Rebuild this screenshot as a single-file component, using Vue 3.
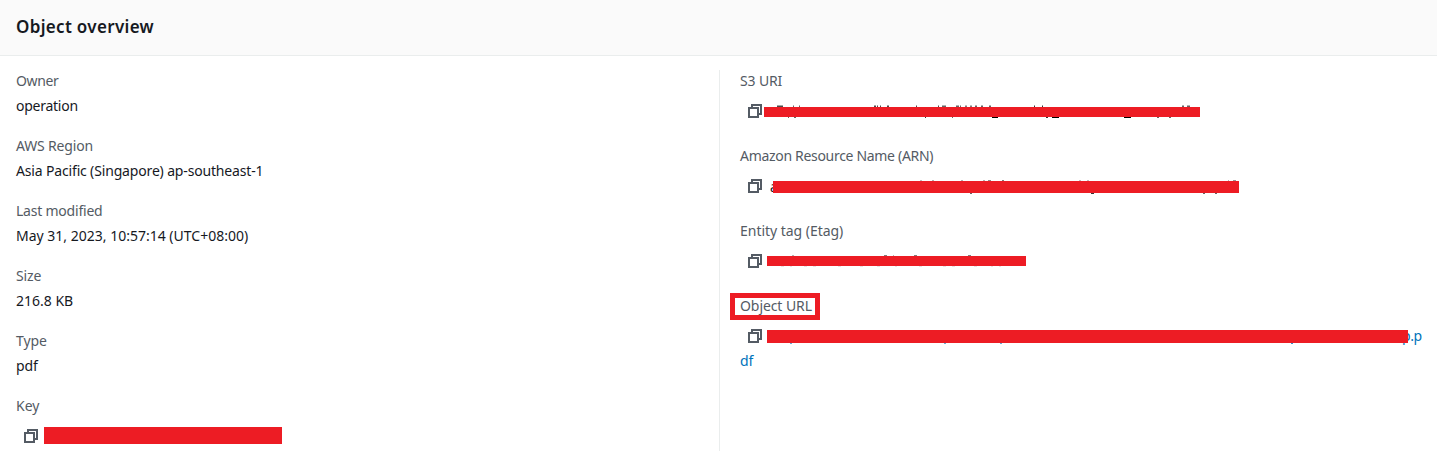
<script setup>
const left = [
  { label: 'Owner', ls: -0.4, value: 'operation', vs: -0.26 },
  { label: 'AWS Region', ls: -0.17, value: 'Asia Pacific (Singapore) ap-southeast-1', vs: -0.16 },
  { label: 'Last modified', ls: -0.22, value: 'May 31, 2023, 10:57:14 (UTC+08:00)', vs: 0 },
  { label: 'Size', ls: -0.1, value: '216.8 KB', vs: 0 },
  { label: 'Type', ls: -0.1, value: 'pdf', vs: -0.1 },
]
// up / down: [x, width, opacity] of the ascender and descender tips that stick out of a bar
const right = [
  { label: 'S3 URI', ls: -0.15, bar: 'uri', x: 764, w: 436, h: 10, tip: 1.5,
    up: [[777, 6, .7], [793, 1, .6], [799, 1, .6], [874, 2, .7], [877, 1, .7], [880, 1, .7], [887, 2, .7], [916, 1, .7], [938, 1, .7], [942, 4, .6], [956, 3, .6], [960, 1, .6], [965, 2, .5], [970, 2, .5], [975, 2, .6], [981, 2, .6], [989, 2, .6], [1034, 1, .8], [1042, 1, .8], [1182, 2, .6], [1187, 3, .6]],
    down: [[788, 1, .6], [794, 2, .6], [925, 1, .8], [952, 1, .6], [992, 6, 1], [1046, 2, .8], [1052, 7, 1], [1124, 7, 1], [1157, 2, .6], [1169, 2, .6]] },
  { label: 'Amazon Resource Name (ARN)', ls: -0.31, bar: 'arn', lead: 'a', x: 773, w: 466, h: 12, tip: 1,
    up: [[920, 2, .25], [932, 2, .3], [961, 2, .3], [983, 2, .3], [988, 3, .45], [1002, 2, .5], [1079, 2, .25], [1087, 2, .25], [1228, 1, .3], [1233, 3, .4]],
    down: [[970, 2, .6], [1091, 3, .8], [1203, 2, .6], [1215, 2, .6]] },
  { label: 'Entity tag (Etag)', ls: -0.03, bar: 'etag', x: 767, w: 259, h: 10, tip: 1,
    up: [[792, 2, .3], [884, 3, .5], [893, 1, .3], [914, 3, .5], [968, 3, .5]],
    down: [[781, 3, .1], [790, 2, .1], [804, 3, .1], [813, 3, .1], [838, 3, .1], [860, 3, .1], [877, 3, .1], [895, 2, .1], [919, 3, .1], [943, 3, .1], [952, 3, .1], [974, 3, .1], [991, 2, .1], [999, 2, .1]] },
  { label: 'Object URL', ls: -0.08, bar: 'url', x: 767, w: 641, h: 13, tip: 1, up: [],
    down: [[790, 2, .6], [944, 2, .6], [1000, 2, .6], [1291, 2, .8]] },
]
</script>

<template>
  <section class="panel">
    <header><h2>Object overview</h2></header>
    <div class="columns">
      <div class="col">
        <div v-for="f in left" :key="f.label" class="field">
          <div class="label" :style="{ letterSpacing: f.ls + 'px' }">{{ f.label }}</div>
          <div class="value" :style="{ letterSpacing: f.vs + 'px' }">{{ f.value }}</div>
        </div>
        <div class="field">
          <div class="label">Key</div>
          <div class="copyable">
            <svg class="copy" viewBox="0 0 16 16"><path d="M2 5h9v9H2zM5 5V2h9v9h-3" /></svg>
            <i class="bar key" />
          </div>
        </div>
      </div>
      <div class="col second">
        <div v-for="f in right" :key="f.label" class="field wide">
          <div class="label" :style="{ letterSpacing: f.ls + 'px' }">
            <span :class="{ marked: f.bar === 'url' }">{{ f.label }}</span>
          </div>
          <div class="copyable">
            <svg class="copy" viewBox="0 0 16 16"><path d="M2 5h9v9H2zM5 5V2h9v9h-3" /></svg>
            <span v-if="f.lead" class="lead">{{ f.lead }}</span>
            <svg class="bar" :class="f.bar" :width="f.w" :height="f.h">
              <rect class="fill" :width="f.w" :height="f.h" />
              <rect v-for="t in f.up" :key="'u' + t[0]" :x="t[0] - f.x" :y="-f.tip" :width="t[1]" :height="f.tip" :opacity="t[2]" />
              <rect v-for="t in f.down" :key="'d' + t[0]" :x="t[0] - f.x" :y="f.h" :width="t[1]" height="1" :opacity="t[2]" />
            </svg>
            <span v-if="f.bar === 'url'" class="link tail">p.p</span>
          </div>
          <div v-if="f.bar === 'url'" class="value link">df</div>
        </div>
      </div>
    </div>
  </section>
</template>

<style>
body { margin: 0; background: #fff; }
</style>
<style scoped>
.panel { height: 466px; overflow: hidden; font: 14px/25px "Noto Sans", sans-serif; color: #16191f; }
header { box-sizing: border-box; height: 56px; background: #fafafa; border-bottom: 1px solid #eaeded; padding: 14px 16px 12px; }
h2 { margin: 0; font-size: 17px; line-height: 26px; font-weight: 600; letter-spacing: 0.32px; }
.columns { display: grid; grid-template-columns: 719px 1fr; padding-top: 14px; }
.col { display: flow-root; height: 381px; padding-left: 16px; box-sizing: border-box; }
.second { border-left: 1px solid #eaeded; padding-left: 20px; }
.field { height: 65px; }
.wide { height: 75px; }
.field:first-child { margin-top: -2px; }
.label { height: 25px; color: #545b64; }
.value { height: 25px; }
.marked { position: relative; }
.marked::after { content: ""; position: absolute; box-sizing: border-box; left: -10px; top: -3px; width: 90px; height: 27px; border: 5px solid #ed1c24; }
.copyable { display: flex; align-items: center; height: 26px; margin: 5px 0 -1px; padding-left: 7px; }
.copy { flex: none; width: 16px; height: 16px; fill: none; stroke: #545b64; stroke-width: 2; }
.bar { position: relative; flex: none; overflow: visible; background: #ed1c24; }
.fill { fill: #ed1c24; }
.key { width: 238px; height: 17px; margin: -1px 0 0 5px; }
.uri { margin: 2px 0 0 1px; }
.arn { margin-top: 2px; }
.etag { margin-left: 4px; }
.url { margin: 1px 0 0 4px; fill: #0073bb; }
.lead { flex: none; width: 8px; margin: 0 -5px 0 7px; }
.tail { align-self: flex-start; margin-left: -6px; letter-spacing: -0.4px; }
.link { color: #0073bb; }
</style>
